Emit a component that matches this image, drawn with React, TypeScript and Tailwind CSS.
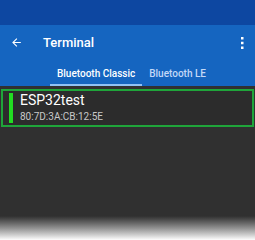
import React from "react";

export default function App() {
  return (
    <div className="w-[255px] h-[240px] flex flex-col bg-[#303030] font-['Roboto',sans-serif] overflow-hidden">
      <div className="h-[25px] bg-[#0d47a1] shrink-0" />
      <div className="h-[35px] bg-[#1565c0] flex items-center text-white shrink-0">
        <svg width="13" height="13" viewBox="0 0 24 24" className="ml-[10px]">
          <path d="M20 11H7.83l5.59-5.59L12 4l-8 8 8 8 1.41-1.41L7.83 13H20v-2z" fill="white" />
        </svg>
        <span className="ml-[20px] text-[13px] font-medium leading-none">Terminal</span>
        <div className="flex-1" />
        <svg width="4" height="12" viewBox="0 0 4 12" className="mr-[11px]">
          <rect x="1" y="0" width="2.5" height="2.5" fill="white" />
          <rect x="1" y="4.75" width="2.5" height="2.5" fill="white" />
          <rect x="1" y="9.5" width="2.5" height="2.5" fill="white" />
        </svg>
      </div>
      <div className="h-[26px] bg-[#1565c0] flex pl-[50px] shrink-0">
        <div className="relative flex items-center px-[7px] text-[10px] font-medium text-white">
          Bluetooth Classic
          <div className="absolute left-0 right-0 bottom-0 h-[2px] bg-[#90c2f5]" />
        </div>
        <div className="flex items-center px-[7px] text-[10px] font-medium text-[#c3d8f7]">Bluetooth LE</div>
      </div>
      <div className="pt-[3px] px-[1px]">
        <div className="h-[38px] border-2 border-[#1fa53a] bg-[#2c2c2c] flex items-stretch">
          <div className="w-[4px] bg-[#22dd22] ml-[6px] my-[2px]" />
          <div className="ml-[7px] flex flex-col justify-center">
            <div className="text-[14px] leading-[15px] text-white">ESP32test</div>
            <div className="text-[10px] leading-[12px] text-[#c8c8c8] mt-[3px]">80:7D:3A:CB:12:5E</div>
          </div>
        </div>
      </div>
      <div className="flex-1" />
      <div className="h-[24px] shrink-0 bg-gradient-to-b from-[#303030] to-white" />
    </div>
  );
}
